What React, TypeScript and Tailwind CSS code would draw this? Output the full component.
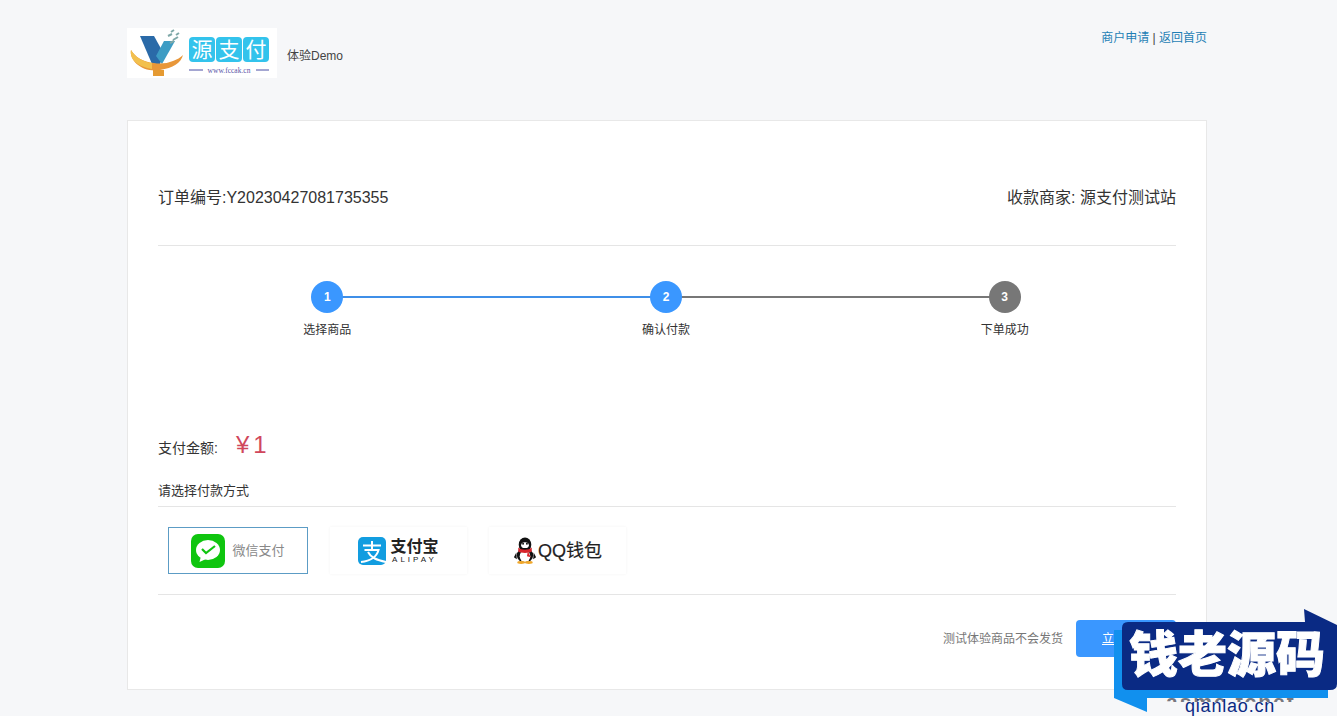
const font = "font-['Liberation_Sans','Noto_Sans_CJK_SC',sans-serif]";

function Logo() {
  return (
    <div className="relative h-[50px] w-[150px] shrink-0 bg-white">
      <svg viewBox="0 0 150 50" className="h-full w-full">
        <path d="M13 8 L27 8 L37 26 L33 36 L25 36 Z" fill="#2a6aa8" />
        <path d="M48 13 L35 36 L29 28 L37 13 Z" fill="#3d9cc4" />
        <path d="M4 22 C2 33 16 45 33 42 C46 40 54 35 56 27 C50 33 38 37 27 35 C16 34 8 29 4 22 Z" fill="#e8973a" />
        <path d="M4 22 C8 29 16 34 25 35 L25 41 C12 39 2 32 4 22 Z" fill="#f2c04e" />
        <rect x="26" y="42" width="11" height="6" fill="#e59a32" />
        <path d="M41 8 l4 -2 M46 12 l5 -3 M44 4 l3 -2 M49 7 l3 -2 M43 15 l4 -2" stroke="#7fa8a8" strokeWidth="2" />
        <rect x="62" y="9" width="26" height="25" rx="4" fill="#33c3ec" />
        <rect x="89" y="9" width="26" height="25" rx="4" fill="#33c3ec" />
        <rect x="116" y="9" width="26" height="25" rx="4" fill="#33c3ec" />
        <text x="75" y="29" textAnchor="middle" fontSize="21" fill="#fff" fontFamily="Noto Sans CJK SC">源</text>
        <text x="102" y="29" textAnchor="middle" fontSize="21" fill="#fff" fontFamily="Noto Sans CJK SC">支</text>
        <text x="129" y="29" textAnchor="middle" fontSize="21" fill="#fff" fontFamily="Noto Sans CJK SC">付</text>
        <path d="M62 42 H76 M129 42 H142" stroke="#4b4fa5" strokeWidth="1" />
        <text x="102" y="44.500" textAnchor="middle" fontSize="7.500" fill="#5a55a8" fontFamily="Liberation Serif">www.fccak.cn</text>
      </svg>
    </div>
  );
}

function Step({ n, label, active, line }: { n: number; label: string; active: boolean; line?: "blue" | "gray" }) {
  return (
    <div className="relative flex flex-col items-center">
      {line && (
        <div className={`absolute left-1/2 top-[15px] h-0.5 w-full ${line === "blue" ? "bg-[#3f8fe8]" : "bg-[#777777]"}`} />
      )}
      <div
        className={`relative flex h-8 w-8 items-center justify-center rounded-full text-xs font-bold text-white ${active ? "bg-[#3a97ff]" : "bg-[#777777]"}`}
      >
        {n}
      </div>
      <div className="mt-[9px] text-xs leading-[16px] text-[#333333]">{label}</div>
    </div>
  );
}

function PayCard({ children, selected }: { children: React.ReactNode; selected?: boolean }) {
  return (
    <div
      className={`flex h-[47px] items-center justify-center bg-white ${selected ? "w-[140px] border border-[#5c9cc5]" : "w-[137px] shadow-[0_0_3px_rgba(0,0,0,0.05)]"}`}
    >
      {children}
    </div>
  );
}

function Watermark() {
  return (
    <div className="absolute bottom-0 right-0 h-[107px] w-[223px] overflow-hidden">
      <div className="absolute left-[52px] top-[81px] h-[12px] overflow-hidden whitespace-nowrap text-[21px] font-bold leading-[24px] tracking-[2px] text-[#77777f]">
        asme.fcnet
      </div>
      <svg viewBox="0 0 223 107" className="absolute inset-0 h-full w-full">
        <path d="M0 21 H214 V89 H33 L33 103 L0 89 Z" fill="#1190ee" />
        <path d="M190 0 L223 16 V75 Q223 81 216 81 H14 Q8 81 8 75 V19 Q8 13 14 13 H191 Z" fill="#0a2a84" />
      </svg>
      <div className="absolute left-[15px] top-[19px] whitespace-nowrap text-[49px] font-black leading-[54px] text-white [-webkit-text-stroke:1px_white]">
        钱老源码
      </div>
      <div className="absolute left-[71px] top-[90px] whitespace-nowrap text-[18px] leading-[15px] tracking-[0.8px] text-[#0a2a84]">
        qianlao.cn
      </div>
    </div>
  );
}

export default function App() {
  return (
    <div className={`relative h-[716px] w-full overflow-hidden bg-[#f6f7f9] ${font}`}>
      <div className="ml-[127px] w-[1080px] pt-7">
        <div className="flex h-[92px] items-start justify-between">
          <div className="flex items-center">
            <Logo />
            <span className="ml-[10px] mt-[5px] text-xs text-[#444444]">体验Demo</span>
          </div>
          <div className="pt-px text-xs leading-[18px] text-[#444444]">
            <a className="text-[#1f7fb5]">商户申请</a> | <a className="text-[#1f7fb5]">返回首页</a>
          </div>
        </div>

        <div className="h-[570px] w-[1080px] border border-[#e8e8e8] bg-white px-[30px]">
          <div className="flex h-[125px] items-end justify-between border-b border-[#e5e5e5] pb-[36px] text-base leading-[22px] text-[#333333]">
            <span>订单编号:Y20230427081735355</span>
            <span>收款商家: 源支付测试站</span>
          </div>

          <div className="grid grid-cols-3 pr-[2px] pt-[35px]">
            <Step n={1} label="选择商品" active line="blue" />
            <Step n={2} label="确认付款" active line="gray" />
            <Step n={3} label="下单成功" active={false} />
          </div>

          <div className="mt-[92px] flex items-end text-sm text-[#333333]">
            <span className="mb-[3px] w-[78px] leading-[18px]">支付金额:</span>
            <span className="text-2xl leading-[30px] tracking-[4px] text-[#d0475c]">¥1</span>
          </div>

          <div className="mt-[21px] border-b border-[#e5e5e5] pb-[5px] text-[13px] leading-[20px] text-[#333333]">
            请选择付款方式
          </div>

          <div className="flex gap-[22px] border-b border-[#e5e5e5] px-[10px] pb-5 pt-5">
            <PayCard selected>
              <svg viewBox="0 0 34 34" className="h-[34px] w-[34px]">
                <rect width="34" height="34" rx="7" fill="#0fc50f" />
                <ellipse cx="17" cy="16" rx="12" ry="10" fill="#fff" />
                <path d="M10 22 L8.500 28 L15 25 Z" fill="#fff" />
                <path d="M11 15 L15 19 L24 12" stroke="#0fc50f" strokeWidth="2.200" fill="none" />
              </svg>
              <span className="ml-[7px] text-[13px] text-[#888888]">微信支付</span>
            </PayCard>
            <PayCard>
              <svg viewBox="0 0 28 28" className="h-7 w-7 shrink-0">
                <rect width="28" height="28" rx="5" fill="#129de0" />
                <path d="M5 8.500 H23 M14 4 V14 M6.500 13 H20.500 C19 19 13 24 3 25 M10 15 C13 21 19 23 28 25" stroke="#fff" strokeWidth="2" fill="none" />
              </svg>
              <div className="ml-1 flex flex-col items-center text-[#222222]">
                <span className="text-[16px] font-bold leading-[17px]">支付宝</span>
                <span className="text-[8px] leading-[9px] tracking-[3px]">ALIPAY</span>
              </div>
            </PayCard>
            <PayCard>
              <svg viewBox="0 0 24 28" className="h-[27px] w-[24px] shrink-0">
                <ellipse cx="12" cy="8" rx="6.500" ry="7.500" fill="#111" />
                <ellipse cx="12" cy="19" rx="8.500" ry="7.500" fill="#111" />
                <path d="M3 16 L0.500 21 L3.500 23 Z M21 16 L23.500 21 L20.500 23 Z" fill="#111" />
                <ellipse cx="12" cy="20" rx="5.500" ry="6" fill="#fff" />
                <ellipse cx="12" cy="8.500" rx="4" ry="3" fill="#fff" />
                <circle cx="10" cy="7" r="1" fill="#111" />
                <circle cx="14" cy="7" r="1" fill="#111" />
                <path d="M5 11 C8 14 16 14 19 11 L19 15 C16 17 8 17 5 15 Z" fill="#d8262c" />
                <path d="M15 15 L18 21 L14 20 Z" fill="#d8262c" />
                <ellipse cx="8" cy="26.500" rx="4" ry="1.500" fill="#f0a72a" />
                <ellipse cx="16" cy="26.500" rx="4" ry="1.500" fill="#f0a72a" />
              </svg>
              <span className="ml-[1px] text-[18px] font-normal leading-[24px] text-[#222222] [-webkit-text-stroke:0.2px_#222]">QQ钱包</span>
            </PayCard>
          </div>

          <div className="flex items-center justify-end pt-[25px]">
            <span className="mr-[13px] text-xs text-[#777777]">测试体验商品不会发货</span>
            <button className="h-[37px] w-[100px] rounded-sm bg-[#3a97ff] text-xs text-white underline">立即支付</button>
          </div>
        </div>
      </div>
      <Watermark />
    </div>
  );
}
